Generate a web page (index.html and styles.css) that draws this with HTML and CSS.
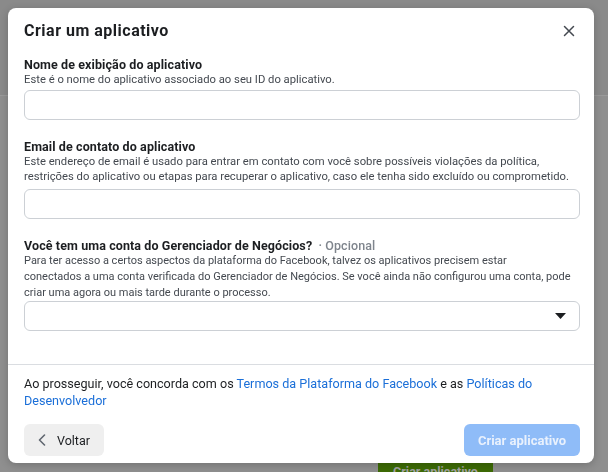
FILE: index.html
```html
<!DOCTYPE html>
<html lang="pt-BR">
<head>
<meta charset="utf-8">
<title>Criar um aplicativo</title>
<link rel="stylesheet" href="styles.css">
</head>
<body>
<div class="page">
  <div class="page-top"></div>
  <div class="page-main">
    <div class="bg-button">Criar aplicativo</div>
  </div>
</div>

<div class="modal" role="dialog">
  <div class="modal-header">
    <div class="modal-title">Criar um aplicativo</div>
    <svg class="close" width="12" height="12" viewBox="0 0 12 12" aria-label="Fechar">
      <path d="M1.5 1.5 L10.5 10.5 M10.5 1.5 L1.5 10.5" stroke="#444950" stroke-width="1.5" stroke-linecap="round" fill="none"/>
    </svg>
  </div>
  <div class="modal-body">
    <div class="field f1">
      <div class="label">Nome de exibição do aplicativo</div>
      <div class="desc">Este é o nome do aplicativo associado ao seu ID do aplicativo.</div>
      <div class="input i1"></div>
    </div>
    <div class="field f2">
      <div class="label">Email de contato do aplicativo</div>
      <div class="desc">Este endereço de email é usado para entrar em contato com você sobre possíveis violações da política, restrições do aplicativo ou etapas para recuperar o aplicativo, caso ele tenha sido excluído ou comprometido.</div>
      <div class="input i2"></div>
    </div>
    <div class="field f3">
      <div class="label">Você tem uma conta do Gerenciador de Negócios? <span class="optional">· Opcional</span></div>
      <div class="desc desc3">Para ter acesso a certos aspectos da plataforma do Facebook, talvez os aplicativos precisem estar<br>conectados a uma conta verificada do Gerenciador de Negócios. Se você ainda não configurou uma conta, pode criar uma agora ou mais tarde durante o processo.</div>
      <div class="input select">
        <svg width="11" height="6" viewBox="0 0 11 6"><path d="M0 0 H11 L5.5 6 Z" fill="#1c1e21"/></svg>
      </div>
    </div>
  </div>
  <div class="divider"></div>
  <div class="modal-footer">
    <div class="terms">Ao prosseguir, você concorda com os <a href="#">Termos da Plataforma do Facebook</a> e as <a href="#">Políticas do Desenvolvedor</a></div>
    <div class="actions">
      <button class="btn back">
        <svg width="8" height="12" viewBox="0 0 8 12"><path d="M6.5 1 L1.5 6 L6.5 11" stroke="#606770" stroke-width="1.6" fill="none" stroke-linecap="round" stroke-linejoin="round"/></svg>
        <span>Voltar</span>
      </button>
      <button class="btn create" disabled>Criar aplicativo</button>
    </div>
  </div>
</div>
</body>
</html>
```

FILE: styles.css
```css
* { box-sizing: border-box; }
html, body { margin: 0; padding: 0; }
body {
  width: 608px;
  height: 472px;
  overflow: hidden;
  font-family: Roboto, "Liberation Sans", Arial, sans-serif;
  background: #8f8f8f;
}
.page { width: 608px; height: 472px; }
.page-top {
  height: 96px;
  background: #8a8a8a;
  border-bottom: 1px solid #9a9a9a;
}
.page-main {
  height: 375px;
  background: #8f8f8f;
  padding: 364px 0 0 378px;
}
.bg-button {
  width: 115px;
  height: 30px;
  background: #3d6b05;
  color: #a3a3a3;
  font-weight: 700;
  font-size: 12.5px;
  padding-top: 4px;
  text-align: center;
}

.modal {
  position: fixed;
  left: 8px;
  top: 8px;
  width: 586px;
  background: #fff;
  border-radius: 8px;
  box-shadow: 0 2px 8px rgba(0,0,0,0.2);
  color: #1c1e21;
}
.modal-header {
  display: flex;
  justify-content: space-between;
  align-items: center;
  padding: 13px 19px 0 16px;
  height: 33px;
}
.modal-title {
  font-size: 16px;
  font-weight: 700;
  letter-spacing: 0.5px;
  line-height: 20px;
  color: #1c1e21;
}
.close { display: block; }

.modal-body {
  padding: 0 14px 33px 16px;
}
.field.f1 { margin-top: 17px; }
.field.f2 { margin-top: 20px; }
.field.f3 { margin-top: 20px; }
.label {
  font-size: 12.5px;
  font-weight: 700;
  letter-spacing: 0.1px;
  line-height: 14px;
  color: #1c1e21;
}
.optional { color: #7f858d; font-weight: 500; margin-left: 3px; }
.desc {
  font-size: 11.25px;
  line-height: 15px;
  color: #444950;
  padding-right: 6px;
}
.desc3 { line-height: 16px; font-size: 11px; padding-right: 0; }
.input {
  height: 30px;
  border: 1px solid #ccd0d5;
  border-radius: 6px;
  background: #fff;
}
.i1 { margin-top: 3px; }
.i2 { margin-top: 5px; }
.select {
  display: flex;
  justify-content: flex-end;
  align-items: center;
  padding-right: 13px;
}
.select svg { display: block; }

.divider { height: 1px; background: #dadde1; }

.modal-footer {
  padding: 10px 14px 7px 16px;
}
.terms {
  font-size: 12.6px;
  line-height: 17px;
  color: #1c1e21;
}
.terms a { color: #1b6fd8; text-decoration: none; }
.actions {
  margin-top: 15px;
  display: flex;
  justify-content: space-between;
}
.btn {
  height: 32px;
  border: none;
  border-radius: 6px;
  font-family: inherit;
  font-size: 12.5px;
  padding: 0;
}
.back {
  width: 80px;
  background: #efefef;
  color: #1c1e21;
  display: flex;
  align-items: center;
  padding-left: 14px;
  gap: 11px;
}
.back svg { display: block; }
.create {
  width: 116px;
  background: #8fbcf8;
  color: #e9f1fd;
  font-size: 13px;
  font-weight: 700;
}
```
